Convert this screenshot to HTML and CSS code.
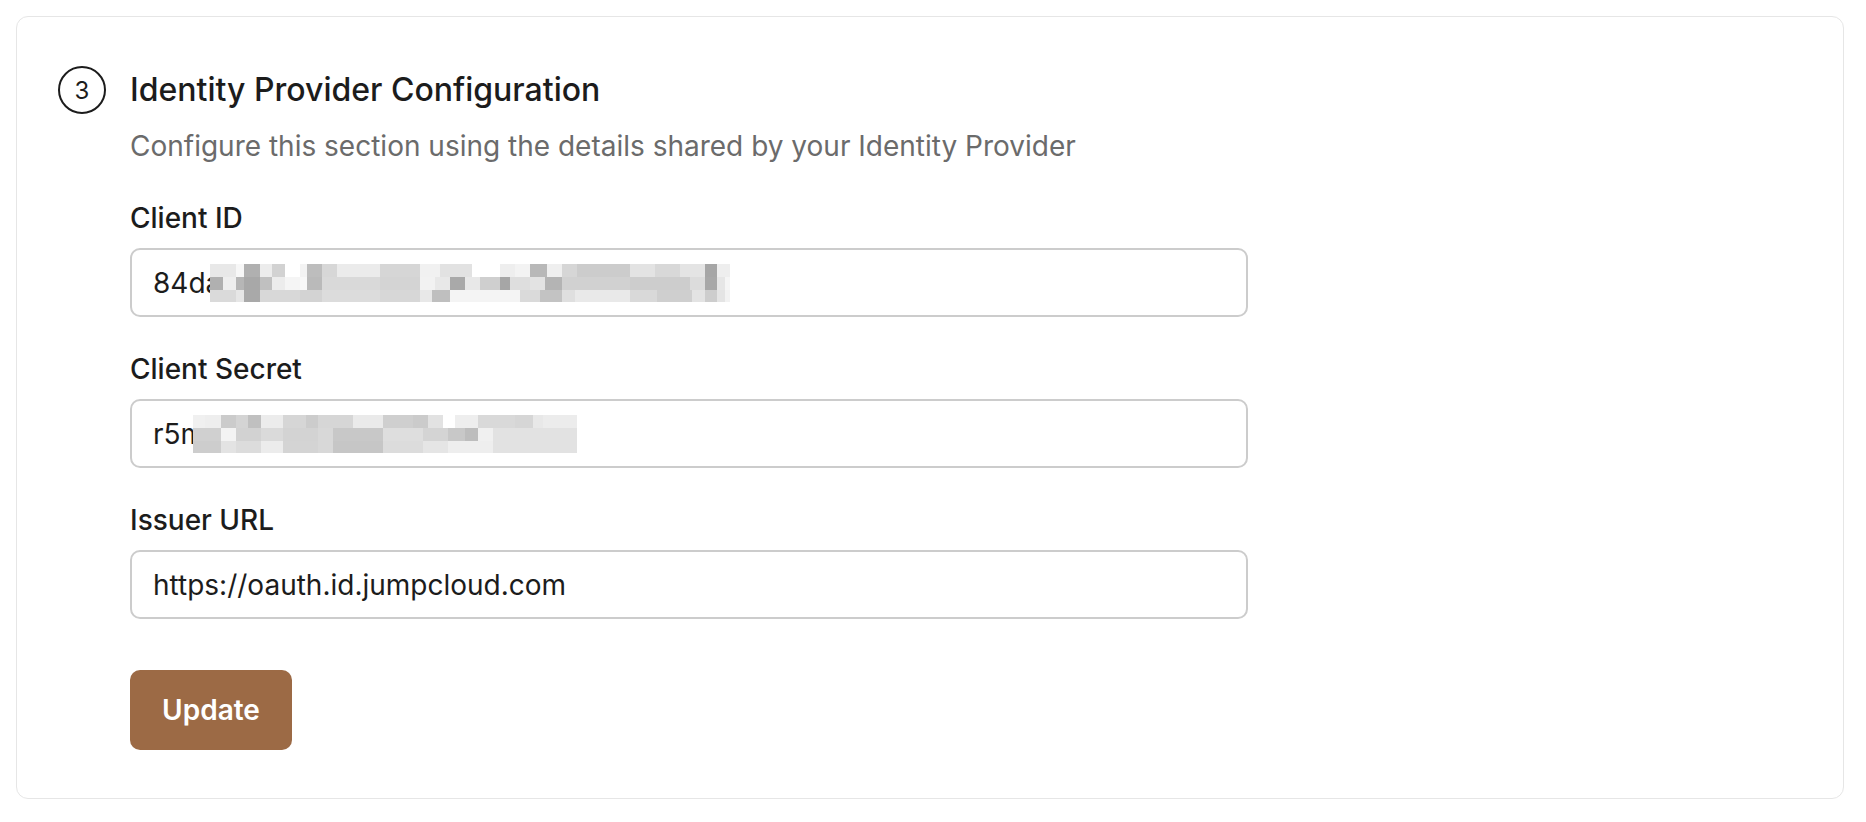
FILE: index.html
```html
<!DOCTYPE html>
<html lang="en">
<head>
<meta charset="utf-8">
<title>Identity Provider Configuration</title>
<link rel="stylesheet" href="styles.css">
</head>
<body>
<section class="card">
  <div class="header">
    <div class="step">3</div>
    <h2 class="title">Identity Provider Configuration</h2>
  </div>
  <div class="content">
    <p class="subtitle">Configure this section using the details shared by your Identity Provider</p>
    <div class="field field-first">
      <label class="label">Client ID</label>
      <div class="input"><span class="value">84da</span><span class="blur blur-id"></span></div>
    </div>
    <div class="field">
      <label class="label">Client Secret</label>
      <div class="input"><span class="value">r5m</span><span class="blur blur-secret"></span></div>
    </div>
    <div class="field">
      <label class="label">Issuer URL</label>
      <div class="input"><span class="value">https://oauth.id.jumpcloud.com</span></div>
    </div>
    <button class="btn">Update</button>
  </div>
</section>
</body>
</html>
```
FILE: styles.css
```css
* { box-sizing: border-box; }
html, body { margin: 0; padding: 0; background: #ffffff; }
body {
  font-family: Inter, "Noto Sans", "Liberation Sans", sans-serif;
  color: #1c1c1c;
}
.card {
  margin: 16px 22px 0 16px;
  height: 783px;
  border: 1.5px solid #e6e6e6;
  border-radius: 12px;
  padding: 49px 40px 0 41px;
}
.header {
  display: flex;
  align-items: center;
  gap: 24px;
  height: 48px;
}
.step {
  width: 48px;
  height: 48px;
  flex: none;
  border: 2px solid #1c1c1c;
  border-radius: 50%;
  display: flex;
  align-items: center;
  justify-content: center;
  font-size: 24px;
  font-weight: 400;
  color: #1c1c1c;
}
.title {
  margin: 0;
  font-size: 32px;
  line-height: 40px;
  font-weight: 500;
  color: #1c1c1c;
}
.content {
  padding-left: 72px;
  width: 1190px;
}
.subtitle {
  margin: 14px 0 0 0;
  font-size: 28px;
  line-height: 36px;
  color: #6b6b6b;
}
.field {
  display: flex;
  flex-direction: column;
  margin-top: 34px;
}
.field-first { margin-top: 36px; }
.label {
  font-size: 28px;
  line-height: 36px;
  font-weight: 500;
  color: #1c1c1c;
  margin-bottom: 12px;
}
.input {
  width: 1118px;
  height: 69px;
  border: 2px solid #cccccc;
  border-radius: 10px;
  padding-left: 21px;
  display: flex;
  align-items: center;
  overflow: hidden;
  font-size: 28px;
  color: #1c1c1c;
}
.value { white-space: nowrap; }
.blur {
  display: inline-block;
  flex: none;
  height: 38px;
  background-repeat: no-repeat;
}
.blur-id {
  width: 520px;
  margin-left: -11px;
  background-image:
    linear-gradient(90deg, #e8e8e8 0 26px, #f7f7f7 26px 34px, #b0b0b0 34px 50px, #ececec 50px 62px, #d2d2d2 62px 75px, #ffffff 75px 90px, #f3f3f3 90px 97px, #bdbdbd 97px 112px, #d7d7d7 112px 127px, #ebebeb 127px 170px, #d6d6d6 170px 210px, #f1f1f1 210px 230px, #e2e2e2 230px 262px, #ffffff 262px 290px, #eeeeee 290px 305px, #f3f3f3 305px 320px, #b8b8b8 320px 337px, #efefef 337px 352px, #d6d6d6 352px 367px, #cccccc 367px 420px, #e3e3e3 420px 445px, #d8d8d8 445px 470px, #e4e4e4 470px 495px, #a6a6a6 495px 507px, #eeeeee 507px 520px),
    linear-gradient(90deg, #b0b0b0 0 13px, #eeeeee 13px 26px, #b6b6b6 26px 34px, #a8a8a8 34px 50px, #c0c0c0 50px 62px, #ececec 62px 75px, #f5f5f5 75px 90px, #f8f8f8 90px 97px, #bababa 97px 112px, #d9d9d9 112px 170px, #d4d4d4 170px 210px, #f2f2f2 210px 225px, #e8e8e8 225px 240px, #a9a9a9 240px 255px, #e8e8e8 255px 270px, #cfcfcf 270px 290px, #a6a6a6 290px 300px, #dedede 300px 320px, #e3e3e3 320px 335px, #b4b4b4 335px 352px, #d1d1d1 352px 420px, #cdcdcd 420px 480px, #dcdcdc 480px 495px, #a8a8a8 495px 507px, #e6e6e6 507px 515px, #f5f5f5 515px 520px),
    linear-gradient(90deg, #dadada 0 26px, #e6e6e6 26px 34px, #a9a9a9 34px 50px, #d8d8d8 50px 90px, #d3d3d3 90px 112px, #dcdcdc 112px 170px, #d7d7d7 170px 210px, #e8e8e8 210px 222px, #bfbfbf 222px 240px, #f4f4f4 240px 310px, #dadada 310px 330px, #c3c3c3 330px 352px, #dfdfdf 352px 365px, #e9e9e9 365px 420px, #d9d9d9 420px 447px, #cfcfcf 447px 482px, #e3e3e3 482px 495px, #cdcdcd 495px 507px, #e4e4e4 507px 515px, #f2f2f2 515px 520px);
  background-size: 520px 13px, 520px 13px, 520px 12px;
  background-position: 0 0, 0 13px, 0 26px;
}
.blur-secret {
  width: 384px;
  margin-left: -12px;
  background-image:
    linear-gradient(90deg, #f0f0f0 0 12px, #eeeeee 12px 28px, #cbcbcb 28px 43px, #d4d4d4 43px 55px, #c0c0c0 55px 68px, #ececec 68px 90px, #d6d6d6 90px 113px, #cccccc 113px 125px, #d6d6d6 125px 160px, #eaeaea 160px 190px, #cfcfcf 190px 220px, #cbcbcb 220px 235px, #e2e2e2 235px 250px, #ffffff 250px 262px, #eeeeee 262px 285px, #d9d9d9 285px 322px, #d6d6d6 322px 340px, #e8e8e8 340px 350px, #ececec 350px 384px),
    linear-gradient(90deg, #d0d0d0 0 28px, #f3f3f3 28px 43px, #d2d2d2 43px 68px, #dadada 68px 90px, #d3d3d3 90px 125px, #d8d8d8 125px 140px, #c8c8c8 140px 190px, #dedede 190px 230px, #d4d4d4 230px 255px, #c8c8c8 255px 272px, #bdbdbd 272px 285px, #f0f0f0 285px 300px, #e2e2e2 300px 384px),
    linear-gradient(90deg, #cdcdcd 0 28px, #e3e3e3 28px 43px, #dcdcdc 43px 68px, #ececec 68px 90px, #d4d4d4 90px 125px, #d8d8d8 125px 140px, #c6c6c6 140px 190px, #dcdcdc 190px 230px, #e5e5e5 230px 255px, #eeeeee 255px 300px, #e2e2e2 300px 384px);
  background-size: 384px 13px, 384px 13px, 384px 12px;
  background-position: 0 0, 0 13px, 0 26px;
}
.btn {
  display: block;
  margin-top: 51px;
  width: 162px;
  height: 80px;
  border: none;
  border-radius: 10px;
  background: #9c6a45;
  color: #ffffff;
  font-family: Inter, "Noto Sans", sans-serif;
  font-size: 28px;
  font-weight: 600;
}
```
